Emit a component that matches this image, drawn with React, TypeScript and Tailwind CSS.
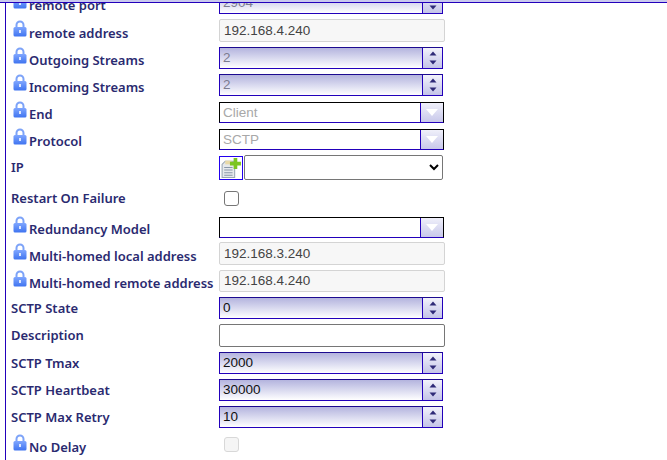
const labelFont = "font-['Noto_Sans',sans-serif]";

function Lock() {
  return (
    <svg width="14" height="17" viewBox="0 0 14 17" className="shrink-0 mr-[2px] mb-[5px]">
      <defs>
        <linearGradient id="lk" x1="0" y1="0" x2="0" y2="1">
          <stop offset="0" stopColor="#7fa6ff" />
          <stop offset="1" stopColor="#3f74f0" />
        </linearGradient>
      </defs>
      <path d="M3.5 8V5a3.5 3.5 0 0 1 7 0v3" fill="none" stroke="#7da3f8" strokeWidth="2" />
      <rect x="0.5" y="7" width="13" height="9.5" rx="1.5" fill="url(#lk)" />
      <rect x="6" y="10" width="2" height="3" fill="#dce7ff" />
    </svg>
  );
}

function Label({ text, lock, low }: { text: string; lock?: boolean; low?: boolean }) {
  return (
    <div className={`w-[213px] shrink-0 flex items-end h-full ${lock ? "pl-[7px]" : "pl-[5px]"} ${low ? "translate-y-[4px]" : ""}`}>
      {lock && <Lock />}
      <span className={`${labelFont} ${lock ? "" : "self-center"} text-[13px] font-semibold leading-[17px] text-[#2a2a70] whitespace-nowrap`}>
        {text}
      </span>
    </div>
  );
}

function Spinner({ value, dim }: { value: string; dim?: boolean }) {
  return (
    <div className="w-[224px] h-full flex border border-[#2200bb] border-t-[#1c0a90]">
      <div className={`flex-1 flex items-center pl-[3px] pt-[1px] bg-gradient-to-b from-[#b4b4de] to-white font-['Liberation_Sans',sans-serif] text-[13.5px] ${dim ? "text-[#7c7c90]" : "text-[#111]"}`}>
        {value}
      </div>
      <div className="w-[20px] border-l border-[#2200bb] bg-gradient-to-b from-[#f2f2fb] to-[#c4c4e8] flex flex-col items-center justify-center gap-[4px]">
        <svg width="8" height="5" viewBox="0 0 8 5"><path d="M4 0.5L7.5 4.500H0.5Z" fill="#2f2a78" /></svg>
        <svg width="8" height="5" viewBox="0 0 8 5"><path d="M4 4.500L7.5 0.500H0.5Z" fill="#2f2a78" /></svg>
      </div>
    </div>
  );
}

function Combo({ value }: { value?: string }) {
  return (
    <div className="w-[225px] h-full flex border border-black border-b-[#2200bb]">
      <div className="flex-1 flex items-center pl-[3px] pt-[1px] bg-white font-['Liberation_Sans',sans-serif] text-[13.5px] text-[#a8a8a8]">
        {value}
      </div>
      <div className="w-[23px] border-l border-[#2200bb] bg-gradient-to-b from-[#f0f0fa] to-[#c8c8ea] flex items-center justify-center">
        <svg width="12" height="7" viewBox="0 0 12 7"><path d="M6 7L12 0H0Z" fill="#ffffff" /></svg>
      </div>
    </div>
  );
}

function ReadOnly({ value }: { value: string }) {
  return (
    <div className="w-[226px] h-full flex items-center pl-[4px] pt-[1px] bg-[#f7f7f7] border border-[#d4d4d4] rounded-[2px] font-['Liberation_Sans',sans-serif] text-[13.5px] text-[#444]">
      {value}
    </div>
  );
}

function Row({ h, mt, children }: { h: string; mt: string; children: React.ReactNode }) {
  return <div className={`flex items-center shrink-0 ${h} ${mt}`}>{children}</div>;
}

export default function App() {
  return (
    <div className="w-[667px] h-[460px] overflow-hidden bg-white relative">
      <div className="absolute top-0 left-0 right-0 h-[3px] bg-[#c9c9ee] border-b border-[#2200bb] z-10" />
      <div className="h-full ml-[5px] border-l border-[#2200bb] flex flex-col">
        <Row h="h-[22px]" mt="-mt-[8px]"><Label text="remote port" lock /><Spinner value="2904" dim /></Row>
        <Row h="h-[23px]" mt="mt-[5px]"><Label text="remote address" lock /><ReadOnly value="192.168.4.240" /></Row>
        <Row h="h-[22px]" mt="mt-[5px]"><Label text="Outgoing Streams" lock /><Spinner value="2" dim /></Row>
        <Row h="h-[22px]" mt="mt-[5px]"><Label text="Incoming Streams" lock /><Spinner value="2" dim /></Row>
        <Row h="h-[21px]" mt="mt-[6px]"><Label text="End" lock /><Combo value="Client" /></Row>
        <Row h="h-[21px]" mt="mt-[6px]"><Label text="Protocol" lock /><Combo value="SCTP" /></Row>
        <Row h="h-[25px]" mt="mt-[5px]">
          <Label text="IP" />
          <div className="w-[24px] h-[24px] border border-[#2200ee] flex items-center justify-center mr-[1px]">
            <svg width="22" height="22" viewBox="0 0 21 21">
              <path d="M2 7l3-3h9v15.500H2Z" fill="#e6e9ec" stroke="#9aa7b4" />
              <path d="M4 10h8M4 12.500h8M4 15h8M4 17.500h8" stroke="#8a98a8" />
              <path d="M5 3.500h6v3.500H5Z" fill="#e8d9a8" />
              <path d="M13 1h3.500v3.500h3.500v3.500h-3.500v3.500h-3.500v-3.500h-3.500v-3.500h3.500Z" fill="#7cc520" />
            </svg>
          </div>
          <select className="w-[199px] h-full bg-white border border-[#767676] rounded-[2px] text-[13px]"><option></option></select>
        </Row>
        <Row h="h-[15px]" mt="mt-[11px]">
          <Label text="Restart On Failure" />
          <input type="checkbox" className="appearance-none ml-[5px] w-[15px] h-[15px] bg-white border border-[#767676] rounded-[3px]" />
        </Row>
        <Row h="h-[21px]" mt="mt-[11px]"><Label text="Redundancy Model" lock /><Combo /></Row>
        <Row h="h-[23px]" mt="mt-[4px]"><Label text="Multi-homed local address" lock /><ReadOnly value="192.168.3.240" /></Row>
        <Row h="h-[22px]" mt="mt-[5px]"><Label text="Multi-homed remote address" lock /><ReadOnly value="192.168.4.240" /></Row>
        <Row h="h-[22px]" mt="mt-[5px]"><Label text="SCTP State" /><Spinner value="0" /></Row>
        <Row h="h-[23px]" mt="mt-[5px]">
          <Label text="Description" />
          <input className="w-[226px] h-full bg-white border border-[#767676] rounded-[2px]" />
        </Row>
        <Row h="h-[22px]" mt="mt-[5px]"><Label text="SCTP Tmax" /><Spinner value="2000" /></Row>
        <Row h="h-[22px]" mt="mt-[5px]"><Label text="SCTP Heartbeat" /><Spinner value="30000" /></Row>
        <Row h="h-[22px]" mt="mt-[5px]"><Label text="SCTP Max Retry" /><Spinner value="10" /></Row>
        <Row h="h-[15px]" mt="mt-[9px]">
          <Label text="No Delay" lock low />
          <input type="checkbox" disabled className="appearance-none ml-[5px] w-[15px] h-[15px] bg-[#f5f5f5] border border-[#d8d8d8] rounded-[3px]" />
        </Row>
      </div>
    </div>
  );
}
